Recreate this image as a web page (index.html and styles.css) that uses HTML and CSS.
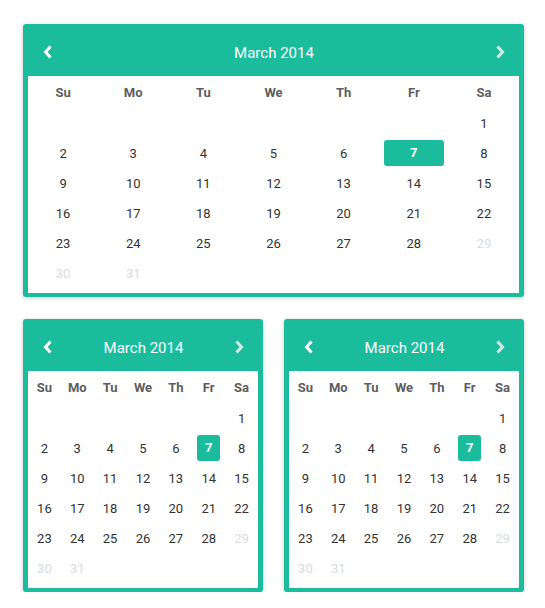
FILE: index.html
```html
<!DOCTYPE html>
<html>
<head>
<meta charset="utf-8">
<link rel="stylesheet" href="styles.css">
</head>
<body>
<div class="page">
  <div class="cal cal-lg">
    <div class="cal-head">
      <svg class="chev" width="10" height="14" viewBox="0 0 10 14"><polyline points="7.5,1.5 2.5,7 7.5,12.5" fill="none" stroke="#fff" stroke-width="3"/></svg>
      <span class="title">March 2014</span>
      <svg class="chev" width="10" height="14" viewBox="0 0 10 14"><polyline points="2.5,1.5 7.5,7 2.5,12.5" fill="none" stroke="#d8e8e4" stroke-width="3"/></svg>
    </div>
    <div class="cal-body">
      <div class="wd">Su</div><div class="wd">Mo</div><div class="wd">Tu</div><div class="wd">We</div><div class="wd">Th</div><div class="wd">Fr</div><div class="wd">Sa</div>
      <div class="d"></div><div class="d"></div><div class="d"></div><div class="d"></div><div class="d"></div><div class="d"></div><div class="d">1</div>
      <div class="d">2</div><div class="d">3</div><div class="d">4</div><div class="d">5</div><div class="d">6</div><div class="d"><span class="sel">7</span></div><div class="d">8</div>
      <div class="d">9</div><div class="d">10</div><div class="d">11</div><div class="d">12</div><div class="d">13</div><div class="d">14</div><div class="d">15</div>
      <div class="d">16</div><div class="d">17</div><div class="d">18</div><div class="d">19</div><div class="d">20</div><div class="d">21</div><div class="d">22</div>
      <div class="d">23</div><div class="d">24</div><div class="d">25</div><div class="d">26</div><div class="d">27</div><div class="d">28</div><div class="d off">29</div>
      <div class="d off">30</div><div class="d off">31</div>
    </div>
  </div>
  <div class="small-row">
    <div class="cal">
      <div class="cal-head">
        <svg class="chev" width="10" height="14" viewBox="0 0 10 14"><polyline points="7.5,1.5 2.5,7 7.5,12.5" fill="none" stroke="#fff" stroke-width="3"/></svg>
        <span class="title">March 2014</span>
        <svg class="chev" width="10" height="14" viewBox="0 0 10 14"><polyline points="2.5,1.5 7.5,7 2.5,12.5" fill="none" stroke="#d8e8e4" stroke-width="3"/></svg>
      </div>
      <div class="cal-body">
        <div class="wd">Su</div><div class="wd">Mo</div><div class="wd">Tu</div><div class="wd">We</div><div class="wd">Th</div><div class="wd">Fr</div><div class="wd">Sa</div>
        <div class="d"></div><div class="d"></div><div class="d"></div><div class="d"></div><div class="d"></div><div class="d"></div><div class="d">1</div>
        <div class="d">2</div><div class="d">3</div><div class="d">4</div><div class="d">5</div><div class="d">6</div><div class="d"><span class="sel">7</span></div><div class="d">8</div>
        <div class="d">9</div><div class="d">10</div><div class="d">11</div><div class="d">12</div><div class="d">13</div><div class="d">14</div><div class="d">15</div>
        <div class="d">16</div><div class="d">17</div><div class="d">18</div><div class="d">19</div><div class="d">20</div><div class="d">21</div><div class="d">22</div>
        <div class="d">23</div><div class="d">24</div><div class="d">25</div><div class="d">26</div><div class="d">27</div><div class="d">28</div><div class="d off">29</div>
        <div class="d off">30</div><div class="d off">31</div>
      </div>
    </div>
    <div class="cal">
      <div class="cal-head">
        <svg class="chev" width="10" height="14" viewBox="0 0 10 14"><polyline points="7.5,1.5 2.5,7 7.5,12.5" fill="none" stroke="#fff" stroke-width="3"/></svg>
        <span class="title">March 2014</span>
        <svg class="chev" width="10" height="14" viewBox="0 0 10 14"><polyline points="2.5,1.5 7.5,7 2.5,12.5" fill="none" stroke="#d8e8e4" stroke-width="3"/></svg>
      </div>
      <div class="cal-body">
        <div class="wd">Su</div><div class="wd">Mo</div><div class="wd">Tu</div><div class="wd">We</div><div class="wd">Th</div><div class="wd">Fr</div><div class="wd">Sa</div>
        <div class="d"></div><div class="d"></div><div class="d"></div><div class="d"></div><div class="d"></div><div class="d"></div><div class="d">1</div>
        <div class="d">2</div><div class="d">3</div><div class="d">4</div><div class="d">5</div><div class="d">6</div><div class="d"><span class="sel">7</span></div><div class="d">8</div>
        <div class="d">9</div><div class="d">10</div><div class="d">11</div><div class="d">12</div><div class="d">13</div><div class="d">14</div><div class="d">15</div>
        <div class="d">16</div><div class="d">17</div><div class="d">18</div><div class="d">19</div><div class="d">20</div><div class="d">21</div><div class="d">22</div>
        <div class="d">23</div><div class="d">24</div><div class="d">25</div><div class="d">26</div><div class="d">27</div><div class="d">28</div><div class="d off">29</div>
        <div class="d off">30</div><div class="d off">31</div>
      </div>
    </div>
  </div>
</div>
</body>
</html>
```
FILE: styles.css
```css
* { box-sizing: border-box; }
html, body { margin: 0; background: #fff; }
body { font-family: Roboto, "Liberation Sans", sans-serif; }
.page {
  width: 524px;
  padding: 24px 0 0 23px;
  display: flex;
  flex-direction: column;
  gap: 22px;
}
.small-row {
  display: flex;
  gap: 21px;
}
.small-row .cal { width: 240px; }
.cal {
  background: #1abc9c;
  border-radius: 3px;
  padding: 0 5px 4px;
  box-shadow: 0 1px 4px rgba(0,0,0,0.22);
}
.cal-lg { width: 501px; }
.cal-head {
  height: 52px;
  display: flex;
  align-items: center;
  justify-content: space-between;
  padding: 6px 14px 0 15px;
}
.chev { display: block; margin-top: -3px; }
.title {
  color: #fff;
  font-size: 15px;
}
.cal-body {
  background: #fff;
  display: grid;
  grid-template-columns: repeat(7, 1fr);
  padding: 1px 0 5px;
}
.wd {
  height: 31px;
  line-height: 31px;
  text-align: center;
  font-size: 13px;
  font-weight: 700;
  color: #5e5e5e;
}
.d {
  height: 30px;
  display: flex;
  text-align: center;
  font-size: 13px;
  color: #333;
  align-items: center;
  justify-content: center;
}
.d.off { color: #d8dbe3; }
.sel {
  display: block;
  align-self: stretch;
  flex: 1;
  margin: 2px 5px;
  line-height: 26px;
  background: #1abc9c;
  color: #fff;
  font-weight: 700;
  border-radius: 3px;
}
```
